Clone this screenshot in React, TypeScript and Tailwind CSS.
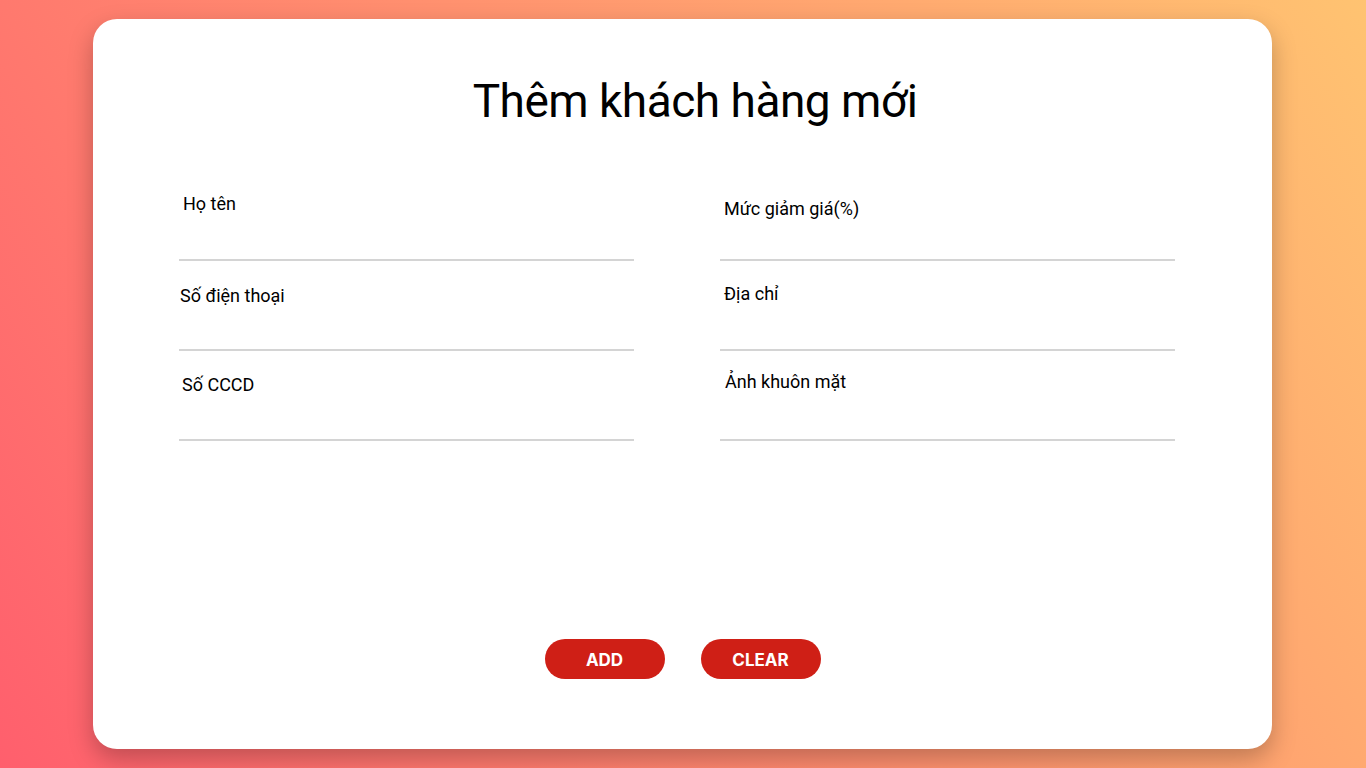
const fields = [
  { label: 'Họ tên', cls: 'pt-[21px] pl-[4px]' },
  { label: 'Mức giảm giá(%)', cls: 'pt-[26px] pl-[4px]' },
  { label: 'Số điện thoại', cls: 'pt-[23px] pl-[1px]' },
  { label: 'Địa chỉ', cls: 'pt-[21px] pl-[4px]' },
  { label: 'Số CCCD', cls: 'pt-[22px] pl-[3px]' },
  { label: 'Ảnh khuôn mặt', cls: 'pt-[19px] pl-[5px]' },
];

export default function App() {
  return (
    <div
      className="min-h-screen w-full flex items-center pl-[93px] bg-[linear-gradient(58deg,#ff5f6d,#ffc371)]"
      style={{ fontFamily: 'Roboto, "Noto Sans", sans-serif' }}
    >
      <div className="w-[1179px] h-[730px] bg-white rounded-[24px] shadow-[0_10px_25px_rgba(0,0,0,0.25)] flex flex-col">
        {/* Title */}
        <h1 className="pt-[50px] pl-[25px] text-center text-[46px] leading-[64px] tracking-[-0.5px] text-black">
          Thêm khách hàng mới
        </h1>

        {/* Form */}
        <form className="ml-[86px] mt-[38px] w-[996px] grid grid-cols-2 gap-x-[86px]">
          {fields.map((f) => (
            <div key={f.label} className="h-[90px] border-b-2 border-[#d4d4d4]">
              <label className={`block text-[18px] leading-[24px] text-black ${f.cls}`}>{f.label}</label>
            </div>
          ))}
        </form>

        {/* Actions */}
        <div className="mt-auto mb-[70px] flex justify-center gap-[36px]">
          {['ADD', 'CLEAR'].map((t) => (
            <button
              key={t}
              type="button"
              className="w-[120px] h-[40px] pt-[3px] rounded-full bg-[#cf1f16] text-white text-[17px] font-bold"
              style={{ fontFamily: 'Inter, "Open Sans", sans-serif' }}
            >
              {t}
            </button>
          ))}
        </div>
      </div>
    </div>
  );
}
